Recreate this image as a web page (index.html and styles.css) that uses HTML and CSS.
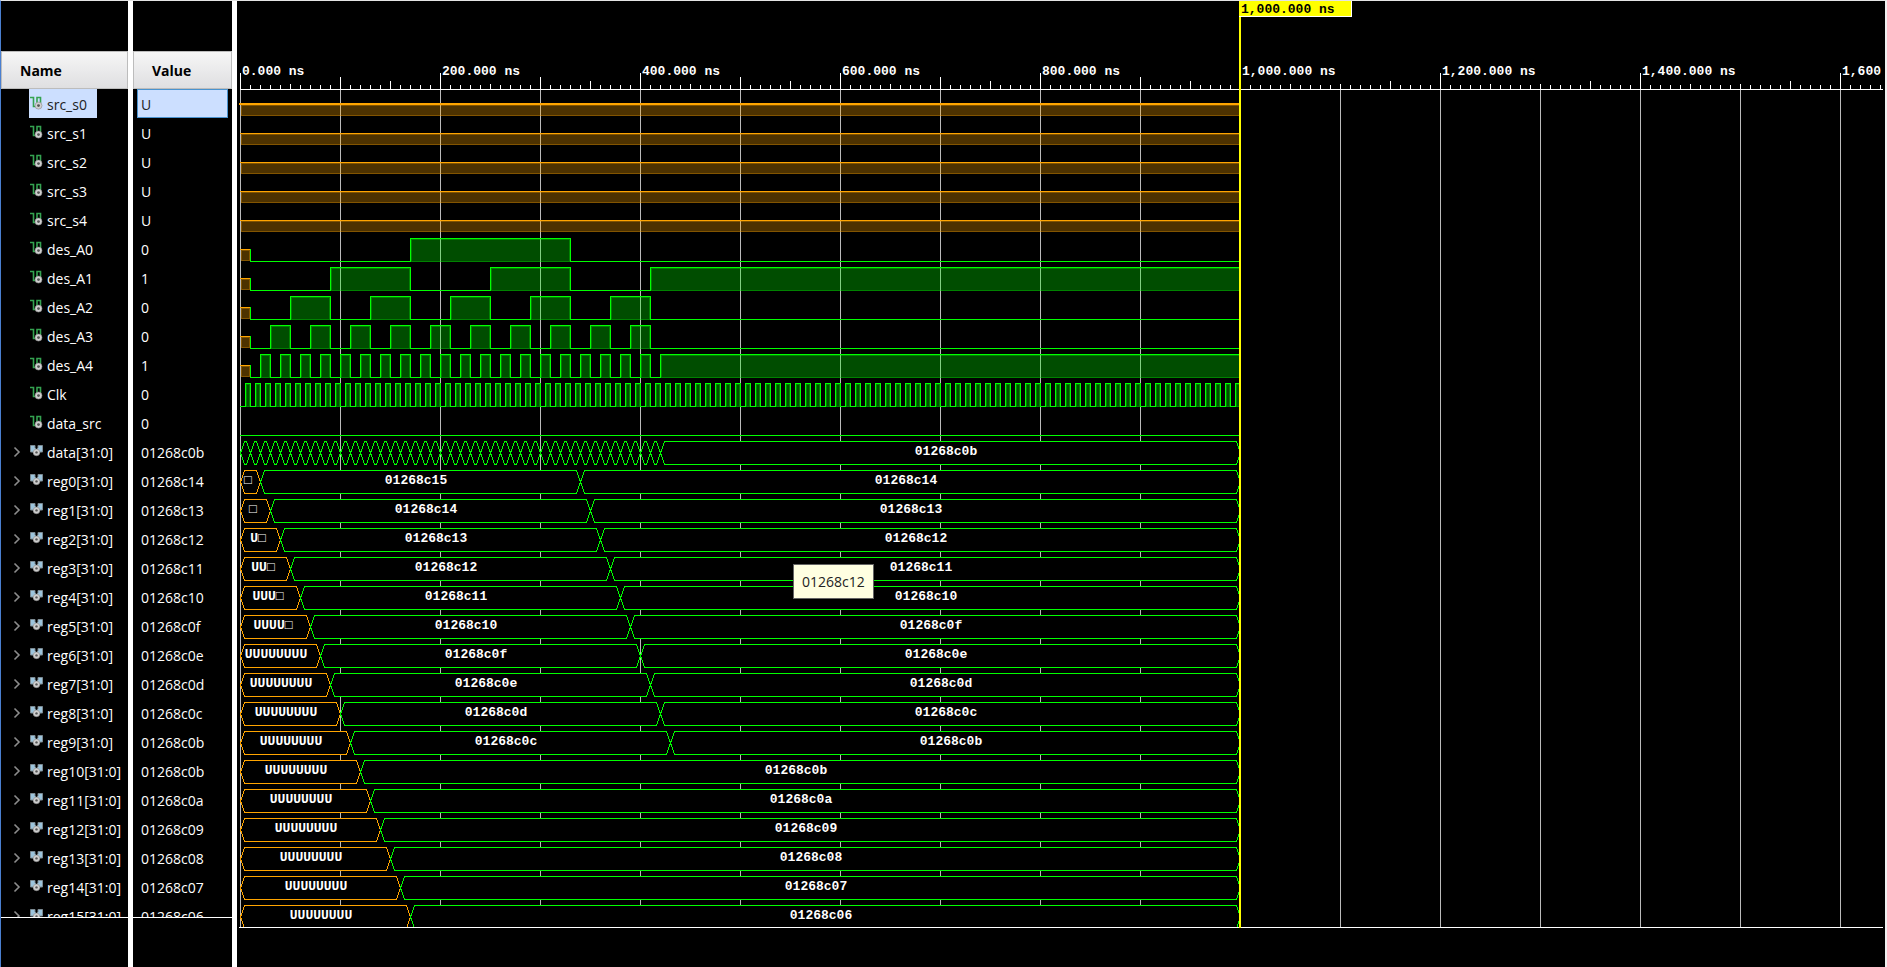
FILE: index.html
```html
<!DOCTYPE html>
<html lang="en">
<head>
<meta charset="utf-8">
<title>Waveform</title>
<link rel="stylesheet" href="styles.css">
</head>
<body>
<svg class="symbols" width="0" height="0" aria-hidden="true">
  <symbol id="icon-wire" viewBox="0 0 13 14">
    <path d="M0 1.5H3.5V10.5H5.5M7 8V1.5H10.5V7" fill="none" stroke="#34a350" stroke-width="1.6"/>
    <circle cx="8.5" cy="9.6" r="3.5" fill="#d0d0d0" stroke="#8a8a8a" stroke-width=".6"/>
    <circle cx="8.5" cy="9.6" r="1.4" fill="#555"/>
  </symbol>
  <symbol id="icon-bus" viewBox="0 0 13 14">
    <path d="M.5 1.5H5V4L6.5 5.5L8 4V1.5H12.5V8H10.5L8 10H5L2.5 8H.5Z" fill="#9cc4dc" stroke="#7c8a92"/>
    <circle cx="6.5" cy="8.4" r="3.3" fill="#d0d0d0" stroke="#8a8a8a" stroke-width=".6"/>
    <circle cx="6.5" cy="8.4" r="1.2" fill="#555"/>
  </symbol>
  <symbol id="icon-chevron" viewBox="0 0 8 12">
    <path d="M1.5 1.5L6 6L1.5 10.5" fill="none" stroke="#8c8c8c" stroke-width="1.6"/>
  </symbol>
</svg>
<main class="viewer">
  <section class="column names">
    <h2 class="heading">Name</h2>
    <ul class="rows" id="names"></ul>
  </section>
  <section class="column values">
    <h2 class="heading">Value</h2>
    <ul class="rows" id="values"></ul>
  </section>
  <section class="waves">
    <svg class="ruler" id="ruler"></svg>
    <svg class="plot" id="plot"></svg>
    <div class="cursor"><span class="cursor-label">1,000.000 ns</span></div>
    <div class="tooltip" role="tooltip">01268c12</div>
  </section>
</main>
<script src="waves.js"></script>
</body>
</html>
```

FILE: styles.css
```css
* {
  box-sizing: border-box;
}

body {
  margin: 0;
  background: #000;
  color: #fff;
  font: 14px/27px "Open Sans", "Noto Sans", sans-serif;
}

.symbols {
  position: absolute;
}

.viewer {
  display: flex;
  height: 100vh;
  overflow: hidden;
  border-top: 1px solid #e4e4e4;
  border-left: 1px solid #4a7fd0;
  border-right: 2px solid #f0f0f0;
}

.column {
  display: flex;
  flex-direction: column;
  flex: none;
  padding: 50px 0 49px;
  border-right: 5px solid #fff;
}

.names {
  width: 132px;
}

.values {
  width: 104px;
}

.heading {
  flex: none;
  height: 38px;
  margin: 0;
  padding-left: 18px;
  border: 1px solid #bcbcbc;
  background: linear-gradient(#f6f6f6, #dfdfe1);
  color: #000;
  font-size: 14px;
  font-weight: 700;
  line-height: 37px;
}

.rows {
  flex: 1;
  min-height: 0;
  margin: 0;
  padding: 0;
  overflow: hidden;
  border-bottom: 1px solid #fff;
  list-style: none;
}

.row {
  display: flex;
  align-items: center;
  height: 29px;
  white-space: nowrap;
}

.names .row {
  padding-left: 12px;
}

.expand {
  display: flex;
  width: 8px;
  height: 12px;
  margin-right: 8px;
  padding: 0;
  border: 0;
  background: none;
}

.expand.empty {
  visibility: hidden;
}

.chevron {
  width: 8px;
  height: 12px;
}

.signal {
  display: flex;
  align-items: center;
  gap: 4px;
  padding: 2px 10px 0 1px;
}

.icon {
  width: 13px;
  height: 14px;
  margin-bottom: 4px;
}

.values .row {
  padding: 2px 0 0 8px;
}

.selected .signal {
  background: #ccdfff;
  color: #222;
}

.values .row.selected {
  margin: 0 4px;
  padding: 2px 0 0 3px;
  border: 1px solid #4a93cf;
  background: #ccdfff;
  color: #222;
}

.waves {
  display: flex;
  flex-direction: column;
  flex: 1;
  min-width: 0;
  position: relative;
  padding: 0 2px 39px 2px;
}

.ruler {
  flex: none;
  width: 100%;
  height: 89px;
}

.plot {
  flex: 1;
  width: 100%;
  min-height: 0;
  border-bottom: 1px solid #fff;
}

.ruler,
.plot {
  font: bold 13px/16px "Liberation Mono", "DejaVu Sans Mono", monospace;
  fill: #fff;
  shape-rendering: crispEdges;
}

.tick {
  fill: #fff;
}

.grid {
  fill: #bbb;
}

.level {
  fill: none;
  stroke: #0f0;
}

.high {
  fill: rgba(0, 255, 0, .3);
}

.high-edge {
  fill: none;
  stroke: rgba(0, 255, 0, .3);
}

.unknown {
  fill: rgba(255, 165, 0, .3);
}

.unknown-edge {
  fill: none;
  stroke: rgba(255, 165, 0, .3);
}

.unknown-level {
  fill: #ffa500;
}

.bus {
  fill: #000;
  stroke: #0f0;
}

.bus.undriven {
  stroke: #ffa500;
}

.bus-text {
  text-anchor: middle;
}

.cursor {
  position: absolute;
  top: 0;
  bottom: 39px;
  left: 1002px;
  width: 2px;
  background: #ff0;
}

.cursor-label {
  display: block;
  width: 113px;
  height: 16px;
  padding-left: 2px;
  border: 1px solid #fff;
  border-width: 0 1px 1px 0;
  background: #ff0;
  color: #000;
  font: bold 13px/17px "Liberation Mono", "DejaVu Sans Mono", monospace;
  white-space: nowrap;
}

.tooltip {
  position: absolute;
  top: 563px;
  left: 556px;
  padding: 3px 8px;
  border: 1px solid #646464;
  background: #ffffe1;
  color: #222;
}
```

FILE: waves.js
```js
const NS = "http://www.w3.org/2000/svg";
const ROW = 29, HIGH = 3, MID = 14, LOW = 26, END = 1000, ORIGIN = 1;

function add(parent, tag, attrs, text) {
  const el = document.createElementNS(NS, tag);
  for (const key in attrs) el.setAttribute(key, attrs[key]);
  if (text !== undefined) el.textContent = text;
  parent.appendChild(el);
  return el;
}

function pulses(start, width, period, stop) {
  const list = [];
  for (let t = start; t < stop; t += period) list.push([t, t + width]);
  return list;
}

const hex = n => "01268c" + n.toString(16).padStart(2, "0");

const signals = [];
for (let i = 0; i < 5; i++) signals.push({ name: "src_s" + i, value: "U", unknown: END });
signals.push(
  { name: "des_A0", value: "0", unknown: 10, high: [[170, 330]] },
  { name: "des_A1", value: "1", unknown: 10, high: [[90, 170], [250, 330], [410, END]] },
  { name: "des_A2", value: "0", unknown: 10, high: pulses(50, 40, 80, 410) },
  { name: "des_A3", value: "0", unknown: 10, high: pulses(30, 20, 40, 410) },
  { name: "des_A4", value: "1", unknown: 10, high: [...pulses(20, 10, 20, 410), [420, END]] },
  { name: "Clk", value: "0", unknown: 0, high: pulses(5, 5, 10, END) },
  { name: "data_src", value: "0", unknown: 0, high: [] },
  { name: "data[31:0]", value: hex(11), bus: [...pulses(0, 10, 10, 420), [420, END, hex(11)]] }
);
const undriven = ["□", "□", "U□", "UU□", "UUU□", "UUUU□"];
for (let i = 0; i < 16; i++) {
  const first = 20 + 10 * i, second = 340 + 10 * i;
  const bus = [[0, first, undriven[i] || "UUUUUUUU", "undriven"]];
  if (i < 10) bus.push([first, second, hex(21 - i)], [second, END, hex(20 - i)]);
  else bus.push([first, END, hex(21 - i)]);
  signals.push({ name: "reg" + i + "[31:0]", value: hex(i < 10 ? 20 - i : 21 - i), bus });
}

const names = document.getElementById("names");
const values = document.getElementById("values");
signals.forEach((s, i) => {
  const cls = i === 0 ? "row selected" : "row";
  const kind = s.bus ? "bus" : "wire";
  names.insertAdjacentHTML("beforeend",
    `<li class="${cls}">` +
    (s.bus
      ? `<button class="expand" aria-label="Expand ${s.name}"><svg class="chevron"><use href="#icon-chevron"/></svg></button>`
      : `<span class="expand empty"></span>`) +
    `<span class="signal"><svg class="icon"><use href="#icon-${kind}"/></svg>${s.name}</span></li>`);
  values.insertAdjacentHTML("beforeend", `<li class="${cls}">${s.value}</li>`);
});

const ruler = document.getElementById("ruler");
const plot = document.getElementById("plot");
const span = ruler.getBoundingClientRect().width;

add(ruler, "rect", { class: "tick", x: ORIGIN, y: 88, width: span, height: 1 });
for (let t = 0; t + ORIGIN < span; t += 10) {
  let top = 84;
  if (t % 200 === 0) top = 72;
  else if (t % 100 === 0) top = t < END ? 76 : 83;
  else if (t % 100 === 50) top = t % 200 === 150 ? 80 : 83;
  add(ruler, "rect", { class: "tick", x: t + ORIGIN, y: top, width: 1, height: 88 - top });
  if (t % 200 === 0) {
    add(ruler, "text", { x: t + ORIGIN + 2, y: 74 }, t.toLocaleString("en-US") + ".000 ns");
  }
  if (t % 100 === 0) {
    add(plot, "rect", { class: "grid", x: t + ORIGIN, y: 0, width: 1, height: "100%" });
  }
}

function drawWire(g, s, selected) {
  if (s.unknown) {
    const w = s.unknown;
    add(g, "rect", { class: "unknown", x: 1, y: MID + 1, width: w - 1, height: 11 });
    add(g, "rect", { class: "unknown-edge", x: 1.5, y: MID + 1.5, width: w - 2, height: 10 });
    add(g, "rect", { class: "unknown-level", x: selected ? -1 : 0, y: selected ? MID - 1 : MID, width: selected ? w + 1 : w, height: selected ? 2 : 1 });
  }
  if (!s.high) return;
  let path = s.unknown ? `M${s.unknown + .5} ${MID}V${LOW + .5}` : `M0 ${LOW + .5}`;
  let low = true;
  for (const [a, b] of s.high) {
    add(g, "rect", { class: "high", x: a + 1, y: HIGH + 1, width: b - a - 1, height: LOW - HIGH });
    add(g, "rect", { class: "high-edge", x: a + 1.5, y: HIGH + 1.5, width: b - a - 2, height: LOW - HIGH - 1 });
    path += `H${a + .5}V${HIGH + .5}H${b + .5}`;
    low = b === END && a !== END - 5;
    path += low ? "" : `V${LOW + 1}M${b + .5} ${LOW + .5}`;
  }
  if (!low || s.high.length === 0) path += `H${END}`;
  add(g, "path", { class: "level", d: path });
}

function drawBus(g, s) {
  const t = HIGH + .5, b = LOW + .5, m = (t + b) / 2;
  for (const [from, to, label, state] of s.bus) {
    const x = from + .5, y = to + .5;
    add(g, "polygon", {
      class: "bus " + (state || ""),
      points: `${x},${m} ${x + 4},${t} ${y - 4},${t} ${y},${m} ${y - 4},${b} ${x + 4},${b}`
    });
    if (!label) continue;
    const shift = label.endsWith("□") ? 2 : 4;
    add(g, "text", { class: "bus-text", x: (from + to) / 2 - shift, y: 17 }, label);
  }
}

signals.forEach((s, i) => {
  const g = add(plot, "g", { transform: `translate(${ORIGIN} ${i * ROW})` });
  if (s.bus) drawBus(g, s);
  else drawWire(g, s, i === 0);
});
```
